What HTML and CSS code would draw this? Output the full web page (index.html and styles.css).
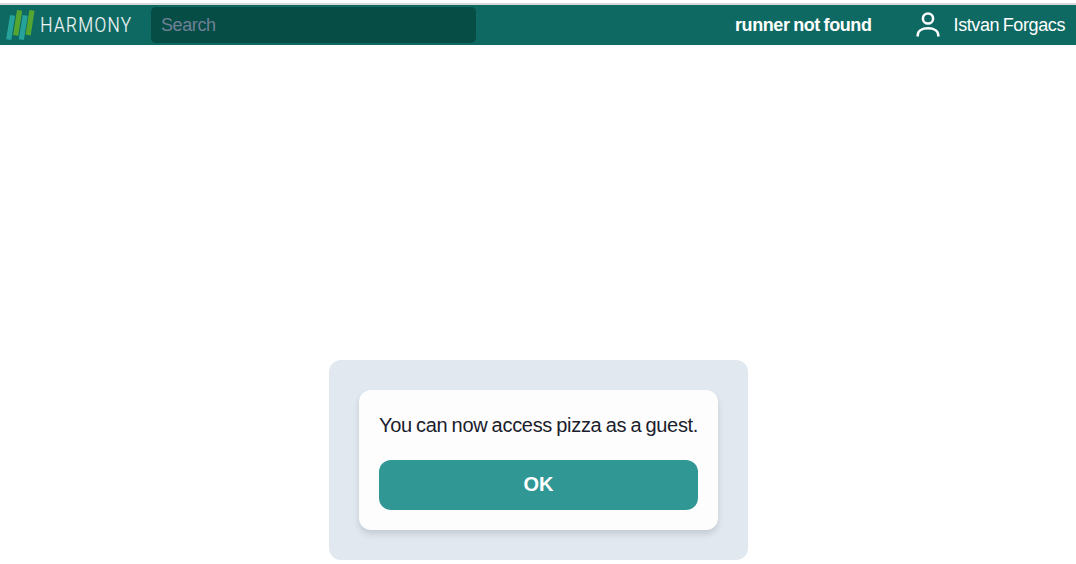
FILE: index.html
```html
<!DOCTYPE html>
<html lang="en">
<head>
  <meta charset="UTF-8">
  <title>Harmony</title>
  <link rel="stylesheet" href="styles.css">
</head>
<body>
  <header class="topbar">
    <a class="logo" href="#">
      <svg width="150" height="40" viewBox="0 0 150 40">
        <g fill="none" stroke-width="5.2" stroke-linecap="butt">
          <path stroke="#25a29a" d="M12.6 10.3 8.7 34.7"/>
          <path stroke="#55a630" d="M19.6 5.3 15.7 30.3"/>
          <path stroke="#25a29a" d="M25.2 10.3 21.3 34.7"/>
          <path stroke="#55a630" d="M32 5.3 28.1 30"/>
        </g>
        <text class="logo-text" transform="translate(40.3 27.3) scale(.82 1)">HARMONY</text>
      </svg>
    </a>
    <input class="search" type="text" placeholder="Search">
    <div class="runner">runner not found</div>
    <div class="user">
      <svg class="user-icon" width="24" height="26" viewBox="0 0 24 26" fill="none" stroke="#fff" stroke-width="2.5">
        <circle cx="12" cy="6.5" r="5.1"/>
        <path d="M1.7 24.5v-1c0-4.4 4-7.2 10.3-7.2s10.3 2.8 10.3 7.2v1"/>
      </svg>
      <span class="user-name">Istvan Forgacs</span>
    </div>
  </header>

  <main class="content">
    <div class="panel">
      <div class="card">
        <p class="message">You can now access pizza as a guest.</p>
        <button class="ok">OK</button>
      </div>
    </div>
  </main>
</body>
</html>
```

FILE: styles.css
```css
* {
  box-sizing: border-box;
}
body {
  margin: 0;
  padding-top: 3px;
  height: 564px;
  overflow: hidden;
  font-family: "Liberation Sans", Arial, sans-serif;
  background: #fff;
}
.topbar {
  display: flex;
  align-items: center;
  height: 42px;
  padding-right: 11px;
  border-top: 2px solid #d9d9d9;
  background: #0e6963;
  color: #fff;
}
.logo {
  width: 151px;
  height: 40px;
}
.logo svg {
  display: block;
}
.logo-text {
  font-family: Roboto, sans-serif;
  font-weight: 300;
  font-size: 21px;
  letter-spacing: 1.6px;
  fill: #f0f7f6;
  stroke: #f0f7f6;
  stroke-width: 0.2;
}
.search {
  width: 325px;
  height: 36px;
  padding: 0 10px;
  border: none;
  border-radius: 5px;
  background: #064d46;
  color: #fff;
  font-family: inherit;
  font-size: 18px;
  letter-spacing: -0.4px;
}
.search::placeholder {
  color: #718096;
}
.runner {
  margin-left: auto;
  font-size: 18px;
  font-weight: bold;
  letter-spacing: -0.4px;
  word-spacing: -1px;
}
.user {
  display: flex;
  align-items: center;
  margin-left: 44px;
}
.user-name {
  margin-left: 14px;
  font-size: 18px;
  letter-spacing: -0.4px;
  word-spacing: -1px;
}
.content {
  display: flex;
  justify-content: center;
  padding-top: 315px;
}
.panel {
  width: 419px;
  height: 200px;
  margin-left: 1px;
  padding: 30px;
  border-radius: 12px;
  background: #e1e8f0;
}
.card {
  height: 140px;
  padding: 20px;
  border-radius: 12px;
  background: #fdfdfd;
  box-shadow: 0 4px 6px rgba(0, 0, 0, 0.13);
}
.message {
  margin: 0 0 20px;
  font-size: 20px;
  line-height: 30px;
  letter-spacing: -0.3px;
  word-spacing: -1.05px;
  white-space: nowrap;
  color: #1a202c;
}
.ok {
  display: block;
  width: 100%;
  height: 50px;
  padding: 0 0 2px;
  border: none;
  border-radius: 12px;
  background: #319795;
  color: #fff;
  font-family: inherit;
  font-size: 20px;
  font-weight: bold;
  cursor: pointer;
}
```
